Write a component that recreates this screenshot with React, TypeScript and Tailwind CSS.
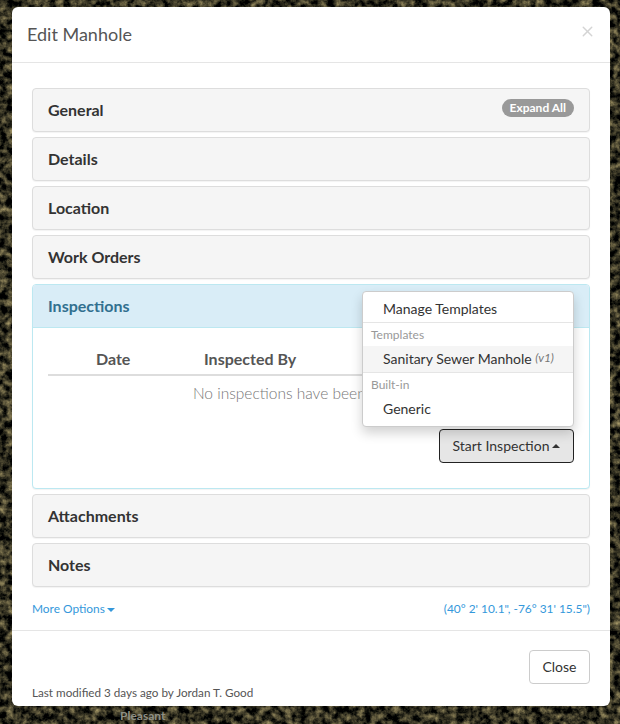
import { X } from 'lucide-react';

const LATO = 'font-["Lato","Liberation_Sans",sans-serif]';

function MapBackdrop() {
  // aerial imagery behind the modal, roughly faked with noise
  return (
    <svg className="absolute inset-0 h-full w-full" xmlns="http://www.w3.org/2000/svg">
      <filter id="aerial" x="0" y="0" width="100%" height="100%" colorInterpolationFilters="sRGB">
        <feTurbulence type="fractalNoise" baseFrequency="0.14" numOctaves="4" seed="23" />
        <feColorMatrix
          type="matrix"
          values="1.05 0 0 0 -0.33  0.95 0 0 0 -0.29  0.65 0 0 0 -0.2  0 0 0 0 1"
        />
      </filter>
      <rect width="100%" height="100%" fill="#26251c" />
      <rect width="100%" height="100%" filter="url(#aerial)" />
    </svg>
  );
}

function Panel({ title, children }: { title: string; children?: React.ReactNode }) {
  return (
    <div className="relative flex h-[44px] items-center rounded border border-[#ddd] bg-[#f5f5f5] pl-[15px] shadow-[0_1px_1px_rgba(0,0,0,0.05)]">
      <h4 className="text-[16px] font-bold text-[#333]">{title}</h4>
      {children}
    </div>
  );
}

function Caret({ className }: { className: string }) {
  return (
    <svg width="8" height="4" viewBox="0 0 8 4" className={className}>
      <path d="M0 4 L4 0 L8 4 Z" fill="currentColor" />
    </svg>
  );
}

function InspectionsPanel() {
  return (
    <div className="relative rounded border border-[#bce8f1] bg-white shadow-[0_1px_1px_rgba(0,0,0,0.05)]">
      <div className="flex h-[43px] items-center rounded-t-[3px] border-b border-[#bce8f1] bg-[#d9edf7] pl-[15px]">
        <h4 className="text-[16px] font-bold text-[#31708f]">Inspections</h4>
      </div>
      <div className="px-[15px] pt-[19px] pb-[25px]">
        <div className="grid h-[29px] grid-cols-[108px_1fr] border-b-2 border-[#ddd] pl-[48px] text-[16px] font-bold leading-[24px] text-[#555]">
          <span>Date</span>
          <span>Inspected By</span>
        </div>
        <p className="h-[34px] text-center text-[15.5px] leading-[34px] font-light text-[#777]">
          No inspections have been recorded
        </p>
        <div className="mt-[19px] flex justify-end">
          <button className="flex h-[34px] w-[135px] items-center justify-center gap-[3px] rounded border border-[#222] bg-[#e6e6e6] pb-[2px] text-[14px] text-[#333]">
            Start Inspection
            <Caret className="mt-[2px]" />
          </button>
        </div>
      </div>
      {/* open dropdown */}
      <div className="absolute top-[6px] right-[15px] w-[212px] rounded border border-[#ccc] bg-white pt-[4px] pb-[5px] text-[14px] text-[#333] shadow-[0_6px_12px_rgba(0,0,0,0.18)]">
        <div className="flex h-[26px] items-center pb-[2px] pl-[20px]">Manage Templates</div>
        <div className="h-px bg-[#e5e5e5]" />
        <div className="flex h-[23px] items-center pl-[8px] text-[12px] text-[#999]">Templates</div>
        <div className="flex h-[26px] items-center bg-[#f5f5f5] pb-[2px] pl-[20px]">
          Sanitary Sewer Manhole&nbsp;<em className="text-[12px] text-[#777]">(v1)</em>
        </div>
        <div className="h-px bg-[#e5e5e5]" />
        <div className="flex h-[24px] items-center pl-[8px] text-[12px] text-[#999]">Built-in</div>
        <div className="flex h-[24px] items-center pb-[2px] pl-[20px]">Generic</div>
      </div>
    </div>
  );
}

export default function App() {
  return (
    <div className={`relative h-[724px] w-[620px] overflow-hidden ${LATO}`}>
      <MapBackdrop />
      <span className="absolute top-[707px] left-[120px] text-[12px] font-bold text-[#8f8f85]">Pleasant</span>

      <div className="relative mx-[12px] mt-[7px] h-[699px] w-[598px] rounded-md bg-white">
        <header className="flex h-[56px] items-center justify-between border-b border-[#e5e5e5] pr-[14px] pl-[15px]">
          <h3 className="text-[18px] text-[#555]">Edit Manhole</h3>
          <X size={17} strokeWidth={2} className="mb-[6px] text-[#d4d4d4]" />
        </header>

        <div className="px-[20px] pt-[25px]">
          <div className="flex flex-col gap-[5px]">
            <Panel title="General">
              <span className="absolute top-[10px] right-[15px] flex h-[18px] items-center rounded-[10px] bg-[#999] px-[8px] text-[12px] font-bold text-white">
                Expand All
              </span>
            </Panel>
            <Panel title="Details" />
            <Panel title="Location" />
            <Panel title="Work Orders" />
            <InspectionsPanel />
            <Panel title="Attachments" />
            <Panel title="Notes" />
          </div>
          <div className="mt-[13px] flex items-center justify-between text-[11.9px] leading-[18px] text-[#3498db]">
            <span className="flex items-center gap-[2px]">
              More Options
              <Caret className="mt-px rotate-180" />
            </span>
            <span>(40° 2' 10.1", -76° 31' 15.5")</span>
          </div>
        </div>

        <footer className="absolute right-0 bottom-0 left-0 h-[76px] border-t border-[#e5e5e5] px-[20px]">
          <div className="mt-[19px] flex justify-end">
            <button className="h-[34px] w-[61px] rounded border border-[#ccc] bg-white pb-[2px] text-[14px] text-[#333]">Close</button>
          </div>
          <p className="text-[11.7px] leading-[17px] text-[#555]">Last modified 3 days ago by Jordan T. Good</p>
        </footer>
      </div>
    </div>
  );
}
